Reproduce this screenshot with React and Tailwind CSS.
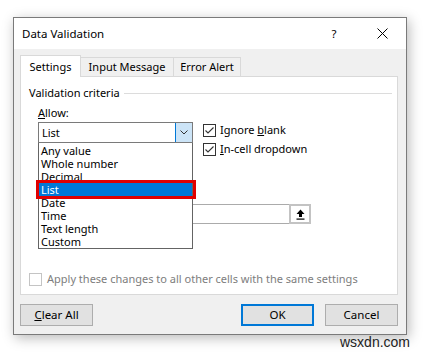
import { useState } from 'react'

const items = ['Any value', 'Whole number', 'Decimal', 'List', 'Date', 'Time', 'Text length', 'Custom']

function Check({ checked = true, disabled = false }) {
  return (
    <span
      className={`w-[13px] h-[13px] border bg-white flex items-center justify-center shrink-0 ${
        disabled ? 'border-[#c4c4c4]' : 'border-[#333333]'
      }`}
    >
      {checked && (
        <svg width="11" height="11" viewBox="0 0 11 11">
          <polyline points="1.5,5.5 4,8 9.5,2.5" fill="none" stroke="#333" strokeWidth="1.1" />
        </svg>
      )}
    </span>
  )
}

function Btn({ children, primary }) {
  return (
    <button
      className={`w-[73px] h-[22px] bg-[#e1e1e1] flex items-center justify-center text-[11.5px] text-black ${
        primary ? 'border-2 border-[#0078d7]' : 'border border-[#adadad]'
      }`}
    >
      {children}
    </button>
  )
}

export default function App() {
  const [selected] = useState('List')

  return (
    <div className="w-[423px] h-[352px] bg-white relative overflow-hidden pl-[13px] pt-[17px] font-['Segoe_UI','Noto_Sans',sans-serif] text-[11px] text-black leading-[16px]">
      <div className="w-[394px] h-[318px] border border-[#7a7a7a] bg-[#f0f0f0] flex flex-col shadow-[2px_3px_12px_rgba(0,0,0,0.28)]">
        {/* title bar */}
        <div className="h-[31px] bg-white flex items-center pl-[8px] shrink-0 text-[11.5px]">
          <span className="flex-1">Data Validation</span>
          <span className="w-[8px] text-center mr-[39px]">?</span>
          <svg width="11" height="11" viewBox="0 0 11 11" className="mr-[18px]">
            <path d="M0.5 0.5 L10.5 10.5 M10.5 0.5 L0.5 10.5" stroke="#000" strokeWidth="1" />
          </svg>
        </div>

        {/* tabs */}
        <div className="flex items-end h-[27px] pl-[6px] shrink-0">
          <div className="w-[61px] h-[22px] -mb-px bg-white border border-b-0 border-[#d9d9d9] flex items-center justify-center relative z-10">
            Settings
          </div>
          <div className="w-[93px] h-[19px] border border-l-0 border-b-0 border-[#d9d9d9] flex items-center justify-center">
            Input Message
          </div>
          <div className="w-[67px] h-[19px] border border-l-0 border-b-0 border-[#d9d9d9] flex items-center justify-center">
            Error Alert
          </div>
        </div>

        {/* panel */}
        <div className="ml-[6px] mr-[8px] h-[219px] bg-white border border-[#d9d9d9] relative shrink-0">
          <div className="flex items-center mt-[8px] pl-[8px] pr-[5px]">
            <span>Validation criteria</span>
            <span className="flex-1 h-px bg-[#dcdcdc] ml-[4px]" />
          </div>

          <div className="pl-[17px] mt-[4px]">
            <span>
              <span className="underline">A</span>llow:
            </span>
          </div>

          <div className="flex items-start pl-[17px] mt-[1px] h-[39px]">
            <div className="w-[155px] h-[21px] border border-[#7a7a7a] flex items-stretch">
              <span className="flex-1 pl-[3px] flex items-center">{selected}</span>
              <span className="w-[17px] bg-[#cce4f7] border-l border-[#0078d7] flex items-center justify-center">
                <svg width="8" height="5" viewBox="0 0 8 5">
                  <polyline points="0.5,0.5 4,4 7.5,0.5" fill="none" stroke="#333" strokeWidth="1" />
                </svg>
              </span>
            </div>
            <div className="ml-[10px] flex flex-col gap-[3px] pt-[-1px]">
              <label className="flex items-center gap-[4px]">
                <Check />
                <span>
                  Ignore <span className="underline">b</span>lank
                </span>
              </label>
              <label className="flex items-center gap-[4px]">
                <Check />
                <span>
                  <span className="underline">I</span>n-cell dropdown
                </span>
              </label>
            </div>
          </div>

          {/* source field (mostly hidden behind list) */}
          <div className="pl-[17px] mt-[43px]">
            <div className="w-[273px] h-[20px] border border-[#ababab] flex justify-end">
              <span className="w-[22px] h-[20px] -mt-px -mr-px border-2 border-[#c3c3c3] bg-white flex items-center justify-center">
                <svg width="9" height="11" viewBox="0 0 9 11">
                  <path d="M4.5 0.5 L8.5 5 L6 5 L6 8 L3 8 L3 5 L0.5 5 Z" fill="#000" />
                  <rect x="0.5" y="9.5" width="8" height="1.2" fill="#000" />
                </svg>
              </span>
            </div>
          </div>

          <div className="flex items-center gap-[5px] pl-[8px] mt-[47px] text-[#7d7d7d]">
            <Check checked={false} disabled />
            <span>Apply these changes to all other cells with the same settings</span>
          </div>

          {/* open dropdown list */}
          <div className="absolute left-[17px] top-[66px] w-[155px] h-[106px] bg-white border border-t-0 border-[#646464] pt-[1px] z-20">
            {items.map((it) => (
              <div
                key={it}
                className={`h-[13px] leading-[13px] pl-[2px] ${
                  it === selected ? 'bg-[#0078d7] text-white' : ''
                }`}
              >
                {it}
              </div>
            ))}
          </div>
          {/* red highlight box */}
          <div className="absolute left-[15px] top-[103px] w-[160px] h-[19px] border-[3px] border-[#e00000] z-30" />
        </div>

        {/* buttons */}
        <div className="flex mt-[9px] pl-[6px] pr-[8px]">
          <Btn>
            <span className="underline">C</span>lear All
          </Btn>
          <span className="flex-1" />
          <Btn primary>OK</Btn>
          <span className="w-[11px]" />
          <Btn>Cancel</Btn>
        </div>
      </div>

      <span className="absolute left-[340px] top-[334px] text-[14px] leading-[16px] text-[#222] font-['Liberation_Sans',sans-serif]">
        wsxdn.com
      </span>
    </div>
  )
}
